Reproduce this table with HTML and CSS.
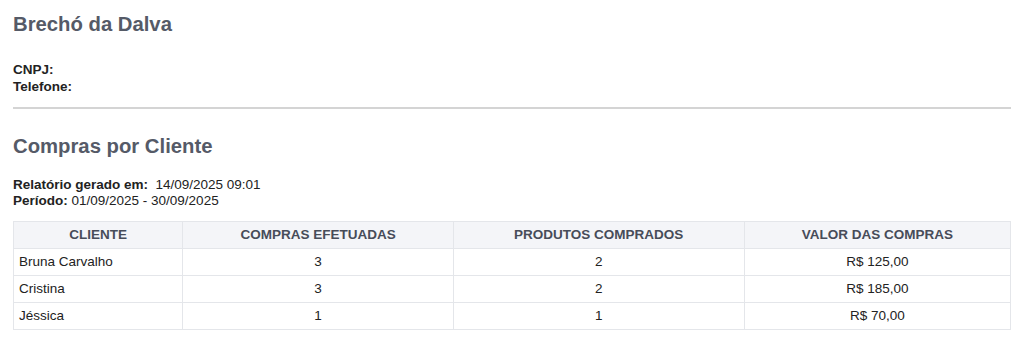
FILE: index.html
```html
<!DOCTYPE html>
<html lang="pt-BR">
<head>
<meta charset="utf-8">
<title>Compras por Cliente</title>
<link rel="stylesheet" href="styles.css">
</head>
<body>
<header class="company">
  <h1 class="company-name">Brechó da Dalva</h1>
  <div class="company-info">
    <div><strong>CNPJ:</strong></div>
    <div><strong>Telefone:</strong></div>
  </div>
</header>
<hr class="divider">
<section class="report">
  <h2 class="report-title">Compras por Cliente</h2>
  <div class="report-meta">
    <div><strong>Relatório gerado em:</strong>&nbsp; 14/09/2025 09:01</div>
    <div><strong>Período:</strong> 01/09/2025 - 30/09/2025</div>
  </div>
  <table class="data-table">
    <colgroup>
      <col class="c1"><col class="c2"><col class="c3"><col class="c4">
    </colgroup>
    <thead>
      <tr>
        <th>CLIENTE</th>
        <th>COMPRAS EFETUADAS</th>
        <th>PRODUTOS COMPRADOS</th>
        <th>VALOR DAS COMPRAS</th>
      </tr>
    </thead>
    <tbody>
      <tr><td class="left">Bruna Carvalho</td><td>3</td><td>2</td><td>R$ 125,00</td></tr>
      <tr><td class="left">Cristina</td><td>3</td><td>2</td><td>R$ 185,00</td></tr>
      <tr><td class="left">Jéssica</td><td>1</td><td>1</td><td>R$ 70,00</td></tr>
    </tbody>
  </table>
</section>
</body>
</html>
```
FILE: styles.css
```css
html, body {
  background: #ffffff;
}
body {
  margin: 0;
  padding: 12px 13px;
  font-family: "Liberation Sans", Arial, sans-serif;
  font-size: 13.5px;
  color: #222222;
}
.company-name {
  margin: 0;
  font-size: 20.3px;
  line-height: 24px;
  font-weight: bold;
  color: #555a67;
}
.company-info {
  margin-top: 26px;
  line-height: 16.5px;
  color: #222222;
}
.divider {
  margin: 12px 0 0 0;
  border: 0;
  height: 2px;
  background: #d4d4d4;
}
.report-title {
  margin: 24px 0 0 0;
  font-size: 20.3px;
  line-height: 26px;
  font-weight: bold;
  color: #555a67;
}
.report-meta {
  margin-top: 18px;
  line-height: 15.5px;
}
.data-table {
  margin-top: 13px;
  width: 100%;
  border-collapse: collapse;
  table-layout: fixed;
}
.c1 { width: 17%; }
.c2 { width: 27.1%; }
.c3 { width: 29.2%; }
.c4 { width: 26.7%; }
.data-table th,
.data-table td {
  border: 1px solid #e4e6ea;
  padding: 5px 5px;
  line-height: 16px;
  text-align: center;
}
.data-table th {
  background: #f4f5f8;
  color: #474c59;
  font-weight: bold;
}
.data-table td {
  color: #222222;
}
.data-table td.left {
  text-align: left;
}
```
